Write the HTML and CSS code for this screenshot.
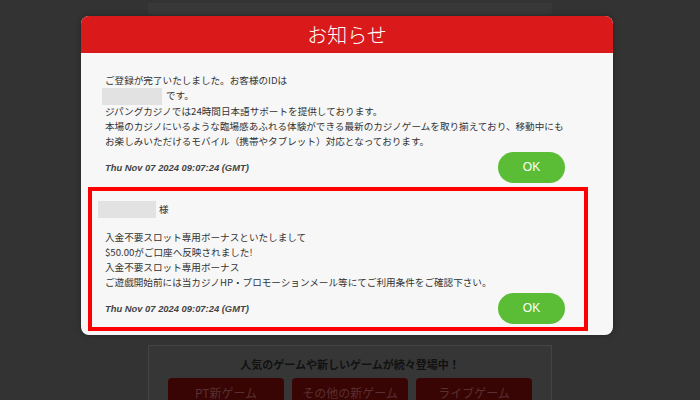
FILE: index.html
```html
<!DOCTYPE html>
<html lang="ja">
<head>
    <meta charset="UTF-8">
    <meta name="viewport" content="width=device-width, initial-scale=1.0">
    <title>お知らせ</title>
    <link rel="stylesheet" href="styles.css">
</head>
<body>

    <div class="page">
        <div class="page-top"></div>

        <div class="games">
            <h2>人気のゲームや新しいゲームが続々登場中！</h2>
            <div class="game-links">
                <a href="#">PT新ゲーム</a>
                <a href="#">その他の新ゲーム</a>
                <a href="#">ライブゲーム</a>
            </div>
        </div>
    </div>

    <div class="modal">
        <div class="modal-header">お知らせ</div>

        <div class="modal-body">
            <div class="message">
                <p>
                    ご登録が完了いたしました。お客様のIDは<br>
                    <span class="masked id-mask"></span>です。<br>
                    ジパングカジノでは24時間日本語サポートを提供しております。<br>
                    本場のカジノにいるような臨場感あふれる体験ができる最新のカジノゲームを取り揃えており、移動中にも<br>
                    お楽しみいただけるモバイル（携帯やタブレット）対応となっております。
                </p>
                <div class="message-foot">
                    <span class="date">Thu Nov 07 2024 09:07:24 (GMT)</span>
                    <button class="ok-btn">OK</button>
                </div>
            </div>

            <div class="message highlight">
                <div class="name-row">
                    <span class="masked name-mask"></span>様
                </div>
                <p>
                    入金不要スロット専用ボーナスといたしまして<br>
                    $50.00がご口座へ反映されました!<br>
                    入金不要スロット専用ボーナス<br>
                    ご遊戯開始前には当カジノHP・プロモーションメール等にてご利用条件をご確認下さい。
                </p>
                <div class="message-foot">
                    <span class="date">Thu Nov 07 2024 09:07:24 (GMT)</span>
                    <button class="ok-btn">OK</button>
                </div>
            </div>
        </div>
    </div>

</body>
</html>
```

FILE: styles.css
```css
body {
    margin: 0;
    background-color: #333333;
    font-family: "Noto Sans CJK JP", sans-serif;
}

/* page behind the overlay */
.page {
    width: 404px;
    margin: 0 auto;
}
.page-top {
    margin-top: 3px;
    height: 12px;
    background: #383838;
    border-radius: 0 0 4px 4px;
}
.games {
    margin-top: 330px;
    height: 60px;
    padding: 8px 19px 0;
    background: #363636;
    border: 1px solid #444;
    text-align: center;
}
.games h2 {
    margin: 0 0 4px;
    font-size: 11px;
    line-height: 20px;
    color: #111;
}
.game-links {
    display: grid;
    grid-template-columns: repeat(3, 1fr);
    gap: 8px;
}
.game-links a {
    height: 30px;
    line-height: 30px;
    background: #380404;
    border-radius: 4px;
    color: #5a3030;
    font-size: 12px;
    text-decoration: none;
}

/* modal */
.modal {
    position: absolute;
    left: 81px;
    top: 16px;
    width: 532px;
    padding-bottom: 4px;
    background: #f7f7f7;
    border-radius: 8px;
    overflow: hidden;
    box-shadow: 0 0 6px rgba(0, 0, 0, 0.3);
}
.modal-header {
    height: 37px;
    line-height: 37px;
    background: #da1a1a;
    color: white;
    font-size: 20px;
    font-weight: 300;
    text-align: center;
}
.modal-body {
    padding: 12px 25px 0 7px;
}
.message {
    padding: 8px 23px 4px 17px;
    font-size: 9.6px;
    line-height: 15px;
    color: #333;
}
.message p {
    margin: 0;
}
.message.highlight {
    border: 4px solid #f00;
    padding: 10px 19px 3px 13px;
}
.masked {
    display: inline-block;
    height: 17px;
    background: #e2e2e2;
    vertical-align: middle;
}
.id-mask {
    width: 60px;
    margin: -1px 4px -1px -3px;
}
.name-row {
    display: flex;
    align-items: center;
    height: 17px;
    margin: 0 0 12px -7px;
}
.name-mask {
    width: 58px;
    margin-right: 3px;
}
.message-foot {
    display: flex;
    justify-content: space-between;
    align-items: center;
    margin-top: 3px;
}
.date {
    font-family: "Liberation Sans", sans-serif;
    font-size: 9.4px;
    font-weight: bold;
    font-style: italic;
    color: #444;
}
.ok-btn {
    width: 67px;
    height: 31px;
    border: none;
    border-radius: 16px;
    background: #5bbd36;
    color: white;
    font-family: "Liberation Sans", sans-serif;
    font-size: 12px;
}
```
